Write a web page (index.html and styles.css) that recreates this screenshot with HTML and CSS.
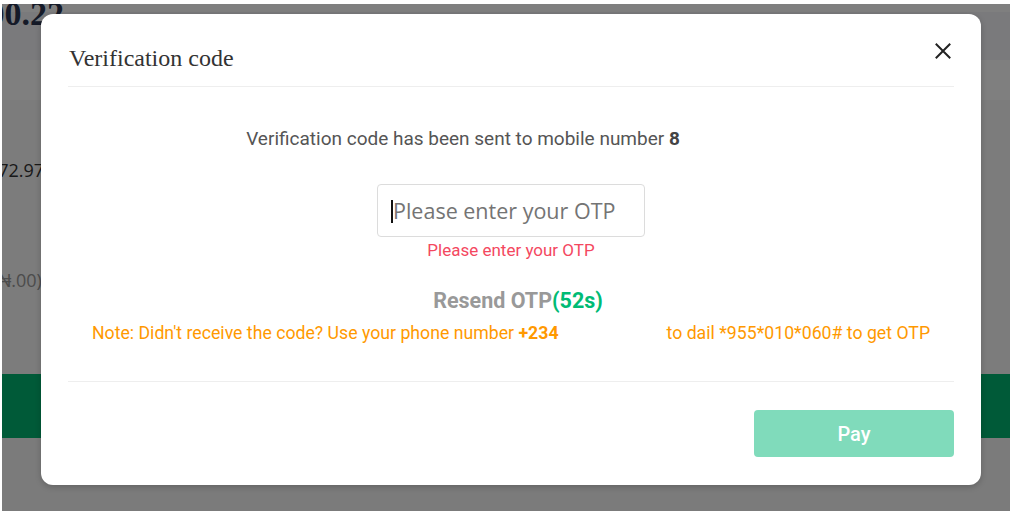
FILE: index.html
```html
<!DOCTYPE html>
<html lang="en">
<head>
    <meta charset="UTF-8">
    <title>Verification code</title>
    <link rel="stylesheet" href="styles.css">
</head>
<body>
    <div class="screen">
        <!-- checkout page behind the dialog -->
        <div class="page">
            <div class="band band-top">
                <div class="amount"><span>₦10,000.22</span></div>
            </div>
            <div class="band band-white"></div>
            <div class="band band-rows">
                <div class="row-value">₦1,872.97</div>
                <div class="row-note">(₦.00)</div>
            </div>
            <div class="band band-green"></div>
            <div class="band band-bottom"></div>
        </div>

        <div class="overlay">
            <div class="modal">
                <div class="modal-header">
                    <h2>Verification code</h2>
                    <button class="close" aria-label="Close">
                        <svg width="16" height="16" viewBox="0 0 16 16">
                            <path d="M1.5 1.5 L14.5 14.5 M14.5 1.5 L1.5 14.5" stroke="#222" stroke-width="2" stroke-linecap="square" fill="none"/>
                        </svg>
                    </button>
                </div>

                <div class="modal-body">
                    <p class="sent-to">Verification code has been sent to mobile number <b>8</b><span class="masked"></span></p>
                    <div class="otp-field">
                        <span class="caret"></span>
                        <input class="otp-input" type="text" placeholder="Please enter your OTP" autofocus>
                    </div>
                    <p class="error">Please enter your OTP</p>
                    <p class="resend">Resend OTP<span class="countdown">(52s)</span></p>
                    <p class="note">Note: Didn't receive the code? Use your phone number <b>+234</b><span class="masked"></span>to dail *955*010*060# to get OTP</p>
                </div>

                <div class="modal-footer">
                    <button class="pay" disabled>Pay</button>
                </div>
            </div>
        </div>
    </div>
</body>
</html>
```

FILE: styles.css
```css
:root {
    --green: #00bb75;
    --green-soft: #80dbbb;
    --orange: #ff9900;
    --red: #f4485f;
    --text: #555555;
    --line: #eeeeee;
}

* {
    box-sizing: border-box;
    margin: 0;
    padding: 0;
}

body {
    background: #ffffff;
    font-family: Roboto, "Noto Sans", sans-serif;
}

.screen {
    position: relative;
    height: 507px;
    margin: 4px 3px 1px 2px;
    overflow: hidden;
}

/* page underneath */

.page {
    display: flex;
    flex-direction: column;
    height: 100%;
}

.band-top {
    height: 56px;
    background: linear-gradient(#ffffff 0, #ffffff 8px, #f4f5f8 8px);
}

.amount {
    width: 62px;
    height: 22px;
    overflow: hidden;
    display: flex;
    align-items: flex-end;
    justify-content: flex-end;
}

.amount span {
    font-family: "Liberation Serif", serif;
    font-weight: bold;
    font-size: 34px;
    line-height: 34px;
    color: #2a3450;
    white-space: nowrap;
    margin-bottom: -5px;
}

.band-white {
    height: 40px;
    background: #ffffff;
}

.band-rows {
    height: 274px;
    background: #f8f8f8;
    padding-top: 58px;
    display: flex;
    flex-direction: column;
}

.row-value,
.row-note {
    font-family: "Open Sans", sans-serif;
    font-size: 18px;
    line-height: 24px;
    white-space: nowrap;
}

.row-value {
    color: #333333;
    margin-left: -42px;
}

.row-note {
    color: #999999;
    margin-top: 86px;
    margin-left: -9px;
}

.band-green {
    height: 64px;
    background: var(--green);
    filter: brightness(0.96);
}

.band-bottom {
    flex: 1;
    background: #f7f7f7;
}

/* dialog */

.overlay {
    position: absolute;
    inset: 0;
    background: rgba(0, 0, 0, 0.5);
}

.modal {
    width: 940px;
    height: 471px;
    margin: 10px 0 0 39px;
    background: #ffffff;
    border-radius: 12px;
    box-shadow: 0 2px 6px rgba(0, 0, 0, 0.2);
    display: flex;
    flex-direction: column;
}

.modal-header {
    height: 73px;
    margin: 0 27px;
    padding: 0 0 4px 1px;
    border-bottom: 1px solid var(--line);
    display: flex;
    align-items: flex-end;
    justify-content: space-between;
    position: relative;
}

.modal-header h2 {
    font-family: "Liberation Serif", serif;
    font-weight: normal;
    font-size: 24px;
    color: #333333;
    line-height: 30px;
    margin-bottom: 9px;
}

.close {
    position: absolute;
    right: 3px;
    top: 29px;
    width: 16px;
    height: 16px;
    border: none;
    background: none;
    display: flex;
}

.modal-body {
    flex: 1;
    display: flex;
    flex-direction: column;
    align-items: center;
    margin: 0 27px;
    border-bottom: 1px solid var(--line);
}

.sent-to {
    margin-top: 41px;
    font-size: 19px;
    line-height: 22px;
    color: var(--text);
}

.sent-to b {
    color: #444444;
}

.masked {
    display: inline-block;
    width: 96px;
}

.otp-field {
    position: relative;
    margin-top: 34px;
}

.caret {
    position: absolute;
    left: 14px;
    top: 16px;
    width: 2px;
    height: 23px;
    background: #111111;
}

.otp-input {
    display: block;
    width: 268px;
    height: 53px;
    border: 1px solid #dcdcdc;
    border-radius: 4px;
    padding: 0 13px 0 15px;
    font-family: "Open Sans", sans-serif;
    font-size: 21.5px;
    color: #333333;
    caret-color: transparent;
    outline: none;
}

.otp-input::placeholder {
    color: #747474;
}

.error {
    margin-top: 3px;
    font-size: 17px;
    line-height: 20px;
    color: var(--red);
}

.resend {
    margin-top: 29px;
    margin-left: 14px;
    font-size: 21.5px;
    line-height: 24px;
    font-weight: bold;
    color: #999999;
}

.countdown {
    color: var(--green);
}

.note {
    margin-top: 9px;
    font-size: 17.7px;
    line-height: 22px;
    color: var(--orange);
    white-space: nowrap;
}

.note .masked {
    width: 108px;
}

.modal-footer {
    height: 103px;
    margin: 0 27px;
    padding-top: 28px;
    display: flex;
    justify-content: flex-end;
    align-items: flex-start;
}

.pay {
    width: 200px;
    height: 47px;
    border: none;
    border-radius: 4px;
    background: var(--green-soft);
    color: #ffffff;
    font-family: Roboto, sans-serif;
    font-size: 20px;
    font-weight: 500;
}
```
